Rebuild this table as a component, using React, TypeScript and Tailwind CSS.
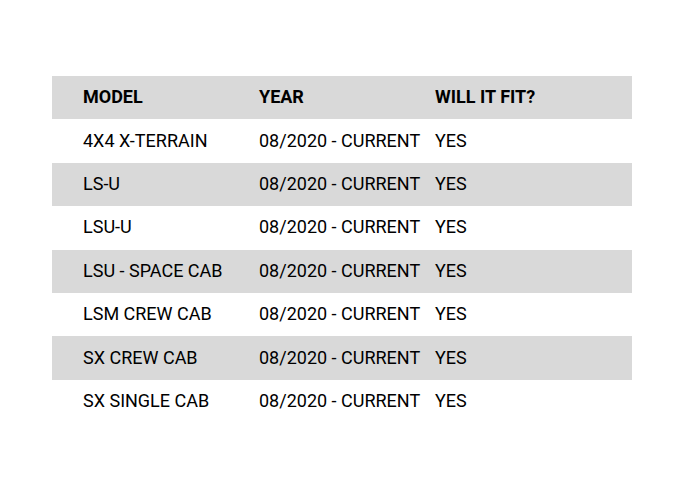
import React from "react";

const rows = [
  "4X4 X-TERRAIN",
  "LS-U",
  "LSU-U",
  "LSU - SPACE CAB",
  "LSM CREW CAB",
  "SX CREW CAB",
  "SX SINGLE CAB",
];

export default function App() {
  return (
    <div className="min-h-[498px] w-[676px] bg-white pt-[76px] pl-[52px] font-['Roboto',sans-serif] text-[18px] text-black">
      <div className="w-[580px]">
        {/* header */}
        <div className="grid h-[43.4px] grid-cols-[207px_176px_1fr] items-center bg-[#d9d9d9] pb-[2px] font-bold">
          <div className="pl-[31px]">MODEL</div>
          <div>YEAR</div>
          <div>WILL IT FIT?</div>
        </div>
        {rows.map((model, i) => (
          <div
            key={model}
            className={
              "grid h-[43.4px] grid-cols-[207px_176px_1fr] items-center pb-[2px] " +
              (i % 2 === 1 ? "bg-[#d9d9d9]" : "bg-white")
            }
          >
            <div className="pl-[31px]">{model}</div>
            <div>08/2020 - CURRENT</div>
            <div>YES</div>
          </div>
        ))}
      </div>
    </div>
  );
}
